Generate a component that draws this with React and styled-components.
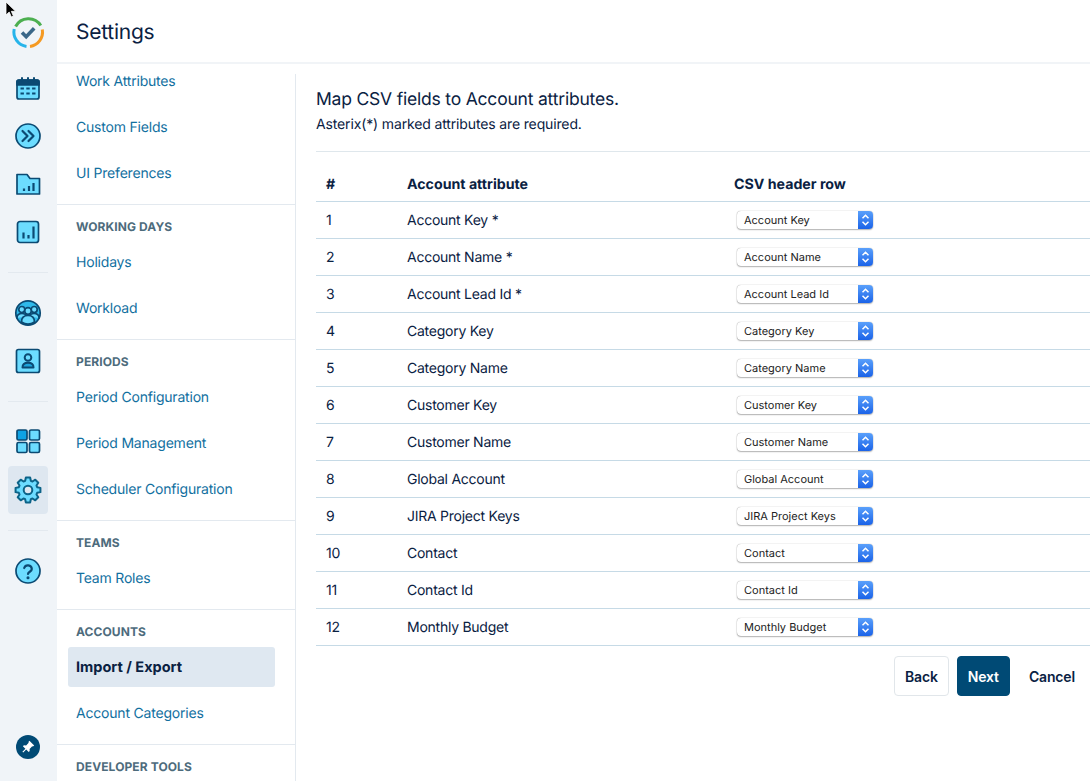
import React from "react"
import styled, { createGlobalStyle } from "styled-components"

const ink = "#0b4a73"
const sky = "#6cdcff"

const Global = createGlobalStyle`
  html, body {
    margin: 0;
    height: 100%;
    overflow: hidden;
    background: #fff;
  }
  body {
    font-family: Inter, "Liberation Sans", sans-serif;
    color: #0a2142;
    text-rendering: geometricPrecision;
  }
`

const Page = styled.div`
  position: relative;
  display: flex;
  height: 781px;
  overflow: hidden;
`

const Rail = styled.aside`
  flex: 0 0 57px;
  box-sizing: border-box;
  display: flex;
  flex-direction: column;
  align-items: center;
  padding: 8px 1px 10px 0;
  background: #f0f4f8;
`

const RailGroup = styled.div`
  display: flex;
  flex-direction: column;
  align-items: center;
  margin-top: ${props => props.$top || 0}px;
`

const RailSlot = styled.div`
  width: 40px;
  height: 48px;
  display: flex;
  align-items: center;
  justify-content: center;
  border-radius: 4px;
  background: ${props => (props.$active ? "#dee7f0" : "transparent")};
`

const RailRule = styled.hr`
  width: 40px;
  height: 1px;
  margin: 16px 0;
  border: 0;
  background: #e3e9ef;
`

const PinSlot = styled(RailSlot)`
  margin-top: auto;
`

const Cursor = styled.svg`
  position: absolute;
  left: 5px;
  top: 1px;
`

const Column = styled.div`
  flex: 1;
  min-width: 0;
  display: flex;
  flex-direction: column;
`

const Header = styled.header`
  flex: 0 0 64px;
  box-sizing: border-box;
  display: flex;
  align-items: center;
  padding: 3px 0 0 19px;
  border-bottom: 2px solid #f1f4f7;
`

const PageTitle = styled.h1`
  margin: 0;
  font-size: 21px;
  font-weight: 400;
  line-height: 28px;
  letter-spacing: -0.25px;
`

const Body = styled.div`
  flex: 1;
  min-height: 0;
  display: flex;
`

const Sidebar = styled.nav`
  flex: 0 0 238px;
  box-sizing: border-box;
  margin-top: -3px;
`

const Section = styled.section`
  padding: ${props => (props.$first ? "0" : "12px")} 0 10px;
  border-bottom: 1px solid #e3e9ef;

  &:last-child {
    border-bottom: 0;
  }
`

const SectionLabel = styled.h2`
  margin: 0 0 5px 19px;
  font-size: 12px;
  font-weight: 700;
  line-height: 20px;
  letter-spacing: 0.1px;
  text-transform: uppercase;
  color: #4d6b7c;
`

const NavItem = styled.a`
  display: flex;
  align-items: center;
  box-sizing: border-box;
  width: 207px;
  height: 40px;
  margin: 0 0 6px 11px;
  padding-left: 8px;
  border-radius: 3px;
  font-size: ${props => (props.$active ? 14.5 : 14)}px;
  letter-spacing: ${props => (props.$active ? 0 : -0.2)}px;
  font-weight: ${props => (props.$active ? 700 : 400)};
  color: ${props => (props.$active ? "#0a2142" : "#12709f")};
  background: ${props => (props.$active ? "#dfe8f1" : "transparent")};

  &:last-child {
    margin-bottom: 1px;
  }
`

const Main = styled.main`
  flex: 1;
  min-width: 0;
  margin-top: 10px;
  padding: 14px 0 0 20px;
  border-left: 1px solid #e3e9ef;
`

const Heading = styled.h2`
  margin: 0;
  font-size: 17.5px;
  font-weight: 400;
  line-height: 24px;
  letter-spacing: -0.2px;
`

const Hint = styled.p`
  margin: 3px 0 0;
  padding-bottom: 16px;
  font-size: 14px;
  line-height: 20px;
  letter-spacing: -0.14px;
  border-bottom: 1px solid #dfe7ec;
`

const Table = styled.div`
  margin-top: 14px;
`

const Row = styled.div`
  display: grid;
  grid-template-columns: 81px 329px 1fr;
  align-items: center;
  box-sizing: border-box;
  height: 37px;
  padding-left: 10px;
  border-bottom: 1px solid #c6dae6;
  font-size: 14px;
  letter-spacing: -0.25px;
`

const HeadRow = styled(Row)`
  height: 36px;
  font-weight: 700;
  font-size: 14.2px;
  letter-spacing: 0;
  padding-top: 1px;
`

const HeadLast = styled.span`
  margin-left: -2px;
`

const Select = styled.div`
  display: flex;
  align-items: center;
  box-sizing: border-box;
  width: 136px;
  height: 18px;
  margin-left: 1px;
  border-radius: 4px;
  background: #fff;
  box-shadow: 0 0 1px rgba(0, 0, 0, 0.45), 0 1px 1.5px rgba(0, 0, 0, 0.28);
  font-size: 11px;
  letter-spacing: 0;
  color: #222;
  overflow: hidden;
`

const SelectText = styled.span`
  flex: 1;
  padding-left: 7px;
  white-space: nowrap;
`

const Stepper = styled.span`
  flex: 0 0 15px;
  height: 100%;
  display: flex;
  align-items: center;
  justify-content: center;
  background: linear-gradient(#5aa0fb, #1b63e8);
`

const Actions = styled.div`
  display: flex;
  justify-content: flex-end;
  align-items: center;
  gap: 8px;
  margin-top: 10px;
  padding-right: 4px;
`

const Button = styled.button`
  height: 40px;
  padding: 0 10px;
  border-radius: 4px;
  border: 1px solid ${props => (props.$primary ? "#004a75" : props.$plain ? "transparent" : "#e1e6ea")};
  background: ${props => (props.$primary ? "#004a75" : "#fff")};
  color: ${props => (props.$primary ? "#fff" : "#0a2142")};
  font-family: inherit;
  font-size: 14px;
  letter-spacing: -0.15px;
  font-weight: 600;
`

const Logo = () => (
  <svg width="34" height="34" viewBox="0 0 34 34" fill="none" strokeWidth="3">
    <path d="M4.6 11.5A14.5 14.5 0 0 1 29.8 10.5" stroke="#4caf50" />
    <path d="M31.3 14.5A14.5 14.5 0 0 1 19 31.4" stroke="#f59a23" />
    <path d="M15.5 31.4A14.5 14.5 0 0 1 3.2 14" stroke="#27b4ea" />
    <path d="M11 17.5l4.2 4.2 8-8.4" stroke="#3a6788" strokeWidth="3.6" />
  </svg>
)

const Glyph = ({ children, fill = sky }) => (
  <svg width="28" height="28" viewBox="0 0 28 28" fill={fill} stroke={ink} strokeWidth="1.7" strokeLinejoin="round" strokeLinecap="round">
    {children}
  </svg>
)

const CalendarIcon = () => (
  <Glyph>
    <rect x="3" y="6" width="22" height="19" rx="2" />
    <path d="M3 11V8a2 2 0 0 1 2-2h18a2 2 0 0 1 2 2v3z" fill={ink} />
    <path d="M8 4v3M14 4v3M20 4v3" strokeWidth="2" />
    <path d="M6.5 14.500h3.400M12.300 14.500h3.400M18.100 14.500h3.400M6.500 19.500h3.400M12.300 19.500h3.400M18.100 19.500h3.400" strokeWidth="2.200" strokeLinecap="butt" />
  </Glyph>
)

const ForwardIcon = () => (
  <Glyph>
    <circle cx="14" cy="14" r="12" />
    <path d="M8.500 9l5 5-5 5M14.500 9l5 5-5 5" fill="none" strokeWidth="2.200" />
  </Glyph>
)

const FolderIcon = () => (
  <Glyph>
    <path d="M3 4.500h10l3 4h9.500v15.500H3z" />
    <path d="M10 21v-2.500M15 21v-5M19.500 21v-8" fill="none" strokeWidth="2.200" strokeLinecap="butt" />
  </Glyph>
)

const ChartIcon = () => (
  <Glyph>
    <rect x="3.500" y="3.500" width="21" height="21" rx="2.500" />
    <path d="M9.500 20.500v-6M14.500 20.500v-3.500M19.500 20.500V8.500" fill="none" strokeWidth="2.200" strokeLinecap="butt" />
  </Glyph>
)

const TeamIcon = () => (
  <Glyph>
    <circle cx="14" cy="14" r="12.200" fill="#2fb9ea" />
    <circle cx="7.800" cy="10.500" r="3" />
    <circle cx="20.200" cy="10.500" r="3" />
    <path d="M3 19c0-3 2-4.500 5-4.500s4 1.500 4 3M25 19c0-3-2-4.500-5-4.500s-4 1.500-4 3" />
    <circle cx="14" cy="12" r="3.300" />
    <path d="M7.500 23c0-4.500 2.500-6.500 6.500-6.500s6.500 2 6.500 6.500a12 12 0 0 1-13 0z" />
  </Glyph>
)

const ContactIcon = () => (
  <Glyph>
    <rect x="2.500" y="2.500" width="23" height="23" rx="2" />
    <circle cx="14" cy="10.500" r="3.300" fill="none" strokeWidth="2" />
    <path d="M8.500 20.500c0-3.500 2-4.700 5.500-4.700s5.500 1.200 5.500 4.700z" fill="#1ea5dc" strokeWidth="2" />
  </Glyph>
)

const GridIcon = () => (
  <Glyph>
    <rect x="3" y="2" width="10" height="10" rx="1.500" fill="#0ea2e4" />
    <rect x="15.500" y="2" width="10" height="10" rx="1.500" />
    <rect x="3" y="14.500" width="10" height="10" rx="1.500" />
    <rect x="15.500" y="14.500" width="10" height="10" rx="1.500" />
  </Glyph>
)

// eight chunky teeth, worked out around the centre of the 28 box
const gearPath = () => {
  const point = (r, a) => `${(14 + r * Math.cos(a)).toFixed(2)} ${(14 + r * Math.sin(a)).toFixed(2)}`
  let d = ""
  for (let i = 0; i < 8; i++) {
    const a = (i * Math.PI) / 4 - Math.PI / 2
    d += `${i ? "L" : "M"}${point(9.6, a - 0.3)} L${point(12.6, a - 0.17)} L${point(12.6, a + 0.17)} L${point(9.6, a + 0.3)} `
  }
  return d + "Z"
}

const GearIcon = () => (
  <Glyph>
    <path d={gearPath()} stroke="#0c6388" strokeWidth="2" />
    <circle cx="14" cy="14" r="4.300" fill="#dee7f0" stroke="#0c6388" strokeWidth="2" />
  </Glyph>
)

const HelpIcon = () => (
  <Glyph>
    <circle cx="14" cy="14" r="12" />
    <path d="M10.200 11a3.900 3.900 0 0 1 7.600 1c0 2.600-3.800 2.800-3.800 5" fill="none" strokeWidth="2.200" />
    <circle cx="14" cy="20.800" r="0.700" fill={ink} />
  </Glyph>
)

const PinIcon = () => (
  <svg width="24" height="24" viewBox="0 0 24 24">
    <circle cx="12" cy="12" r="12" fill="#004a75" />
    <path d="M13.400 5.800l4.800 4.800-1.300 1-.700-.3-2.600 2.600.1 2.200-1 1-2.500-2.500-3 2.900-.8-.7 3-3-2.500-2.500 1-1 2.200.1 2.600-2.600-.300-.700z" fill="#fff" />
  </svg>
)

const Chevrons = () => (
  <svg width="9" height="14" viewBox="0 0 9 14" fill="none" stroke="#fff" strokeWidth="1.500">
    <path d="M1.500 5.300L4.500 2.300l3 3M1.500 8.700l3 3 3-3" />
  </svg>
)

const navSections = [
  { items: ["Work Attributes", "Custom Fields", "UI Preferences"] },
  { label: "Working Days", items: ["Holidays", "Workload"] },
  { label: "Periods", items: ["Period Configuration", "Period Management", "Scheduler Configuration"] },
  { label: "Teams", items: ["Team Roles"] },
  { label: "Accounts", items: ["Import / Export", "Account Categories"] },
  { label: "Developer Tools", items: [] },
]

const fields = [
  ["Account Key *", "Account Key"],
  ["Account Name *", "Account Name"],
  ["Account Lead Id *", "Account Lead Id"],
  ["Category Key", "Category Key"],
  ["Category Name", "Category Name"],
  ["Customer Key", "Customer Key"],
  ["Customer Name", "Customer Name"],
  ["Global Account", "Global Account"],
  ["JIRA Project Keys", "JIRA Project Keys"],
  ["Contact", "Contact"],
  ["Contact Id", "Contact Id"],
  ["Monthly Budget", "Monthly Budget"],
]

const App = () => (
  <Page>
    <Global />
    <Rail>
      <RailSlot>
        <Logo />
      </RailSlot>
      <RailGroup $top={8}>
        <RailSlot><CalendarIcon /></RailSlot>
        <RailSlot><ForwardIcon /></RailSlot>
        <RailSlot><FolderIcon /></RailSlot>
        <RailSlot><ChartIcon /></RailSlot>
      </RailGroup>
      <RailRule />
      <RailGroup>
        <RailSlot><TeamIcon /></RailSlot>
        <RailSlot><ContactIcon /></RailSlot>
      </RailGroup>
      <RailRule />
      <RailGroup>
        <RailSlot><GridIcon /></RailSlot>
        <RailSlot $active><GearIcon /></RailSlot>
      </RailGroup>
      <RailRule />
      <RailSlot><HelpIcon /></RailSlot>
      <PinSlot><PinIcon /></PinSlot>
    </Rail>
    <Column>
      <Header>
        <PageTitle>Settings</PageTitle>
      </Header>
      <Body>
        <Sidebar>
          {navSections.map((section, i) => (
            <Section key={i} $first={i === 0}>
              {section.label && <SectionLabel>{section.label}</SectionLabel>}
              {section.items.map(item => (
                <NavItem key={item} $active={item === "Import / Export"}>
                  {item}
                </NavItem>
              ))}
            </Section>
          ))}
        </Sidebar>
        <Main>
          <Heading>Map CSV fields to Account attributes.</Heading>
          <Hint>Asterix(*) marked attributes are required.</Hint>
          <Table>
            <HeadRow>
              <span>#</span>
              <span>Account attribute</span>
              <HeadLast>CSV header row</HeadLast>
            </HeadRow>
            {fields.map(([attribute, header], i) => (
              <Row key={attribute}>
                <span>{i + 1}</span>
                <span>{attribute}</span>
                <Select>
                  <SelectText>{header}</SelectText>
                  <Stepper><Chevrons /></Stepper>
                </Select>
              </Row>
            ))}
          </Table>
          <Actions>
            <Button>Back</Button>
            <Button $primary>Next</Button>
            <Button $plain>Cancel</Button>
          </Actions>
        </Main>
      </Body>
    </Column>
    <Cursor width="12" height="18" viewBox="0 0 12 18">
      <path d="M1 1v13l3.200-3 2.200 5 2-.9-2.100-4.800h4.300z" fill="#000" stroke="#fff" strokeWidth="0.800" />
    </Cursor>
  </Page>
)

export default App
